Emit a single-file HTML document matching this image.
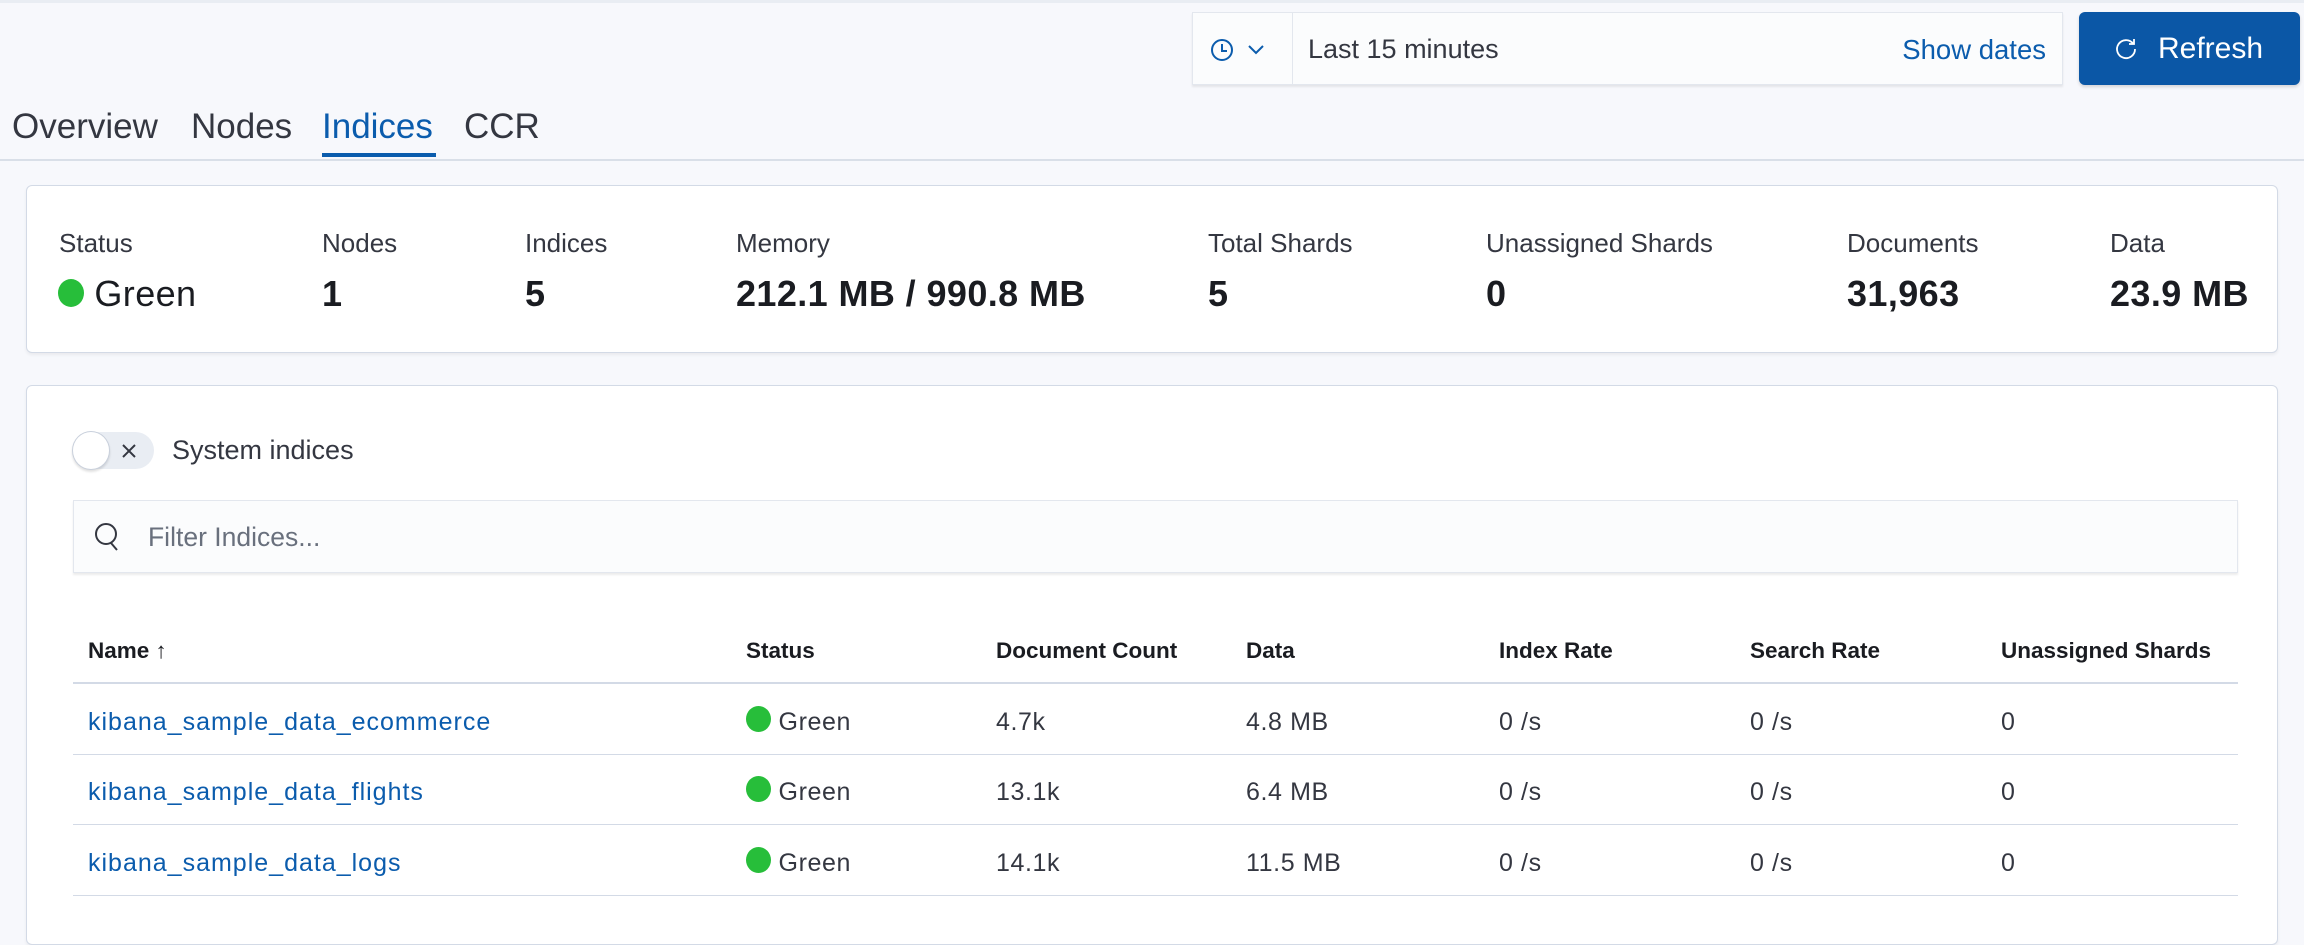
<!DOCTYPE html>
<html><head><meta charset="utf-8"><style>
*{box-sizing:border-box;margin:0;padding:0}
body{width:2304px;height:910px;overflow:hidden;background:#f7f8fc;font-family:"Liberation Sans",sans-serif;color:#1a1c21;position:relative}
.a{position:absolute;white-space:nowrap}
.topline{left:0;top:0;width:2304px;height:3px;background:#e9edf3}
.dp{left:1192px;top:12px;width:871px;height:73px;background:#fbfcfd;border:1px solid #e3e7ee;box-shadow:0 2px 2px rgba(0,0,0,.08)}
.dp .ic{position:absolute;left:0;top:0;width:100px;height:100%;border-right:1px solid #e3e7ee}
.btn{left:2079px;top:12px;width:221px;height:73px;background:#0b57a6;border-radius:6px;color:#fff;font-size:30px;box-shadow:0 2px 3px rgba(0,0,0,.15)}
.tab{top:107px;font-size:35px;color:#343741}
.panel{background:#fff;border:1px solid #d3dae6;border-radius:6px;box-shadow:0 2px 3px rgba(0,0,0,.06)}
.lbl{top:228px;font-size:26px;color:#343741}
.val{top:273px;font-size:36px;letter-spacing:0.4px;font-weight:bold;color:#1a1c21}
.dot{display:inline-block;border-radius:50%;background:#27be3a;vertical-align:middle}
.th{top:638px;font-size:22.5px;font-weight:bold}
.td{font-size:25px;letter-spacing:0.6px;color:#343741}
.lnk{color:#0b5cad;letter-spacing:1px}
.hl{left:73px;width:2165px;height:1px;background:#d3dae6}
</style></head><body>
<div class="a topline"></div>
<div class="a dp"><div class="ic">
<svg style="position:absolute;left:16px;top:24px" width="60" height="26" viewBox="0 0 60 26"><circle cx="13" cy="13" r="10" fill="none" stroke="#0b5cad" stroke-width="2"/><path d="M13 7v7h5" fill="none" stroke="#0b5cad" stroke-width="2"/><path d="M40 9l7 7 7-7" fill="none" stroke="#0b5cad" stroke-width="2"/></svg></div>
<div class="a" style="left:115px;top:21px;font-size:27px;color:#343741">Last 15 minutes</div>
<div class="a" style="right:16px;top:21px;font-size:27.5px;color:#0b5cad">Show dates</div></div>
<div class="a btn"><svg style="position:absolute;left:35px;top:25px" width="24" height="24" viewBox="0 0 24 24"><path d="M19 6.5A9 9 0 1 0 21 12" fill="none" stroke="#fff" stroke-width="1.8"/><path d="M20 2v5h-5" fill="none" stroke="#fff" stroke-width="1.8"/></svg><span style="position:absolute;left:79px;top:20px">Refresh</span></div>
<div class="a tab" style="left:12px">Overview</div>
<div class="a tab" style="left:191px">Nodes</div>
<div class="a tab" style="left:322px;color:#0b5cad">Indices</div>
<div class="a" style="left:322px;top:153px;width:114px;height:4px;background:#0b5cad"></div>
<div class="a tab" style="left:464px">CCR</div>
<div class="a" style="left:0;top:159px;width:2304px;height:2px;background:#d9dfe8"></div>
<div class="a panel" style="left:26px;top:185px;width:2252px;height:168px"></div>
<div class="a lbl" style="left:59px">Status</div>
<div class="a lbl" style="left:322px">Nodes</div>
<div class="a lbl" style="left:525px">Indices</div>
<div class="a lbl" style="left:736px">Memory</div>
<div class="a lbl" style="left:1208px">Total Shards</div>
<div class="a lbl" style="left:1486px">Unassigned Shards</div>
<div class="a lbl" style="left:1847px">Documents</div>
<div class="a lbl" style="left:2110px">Data</div>
<div class="a val" style="left:58px;font-weight:normal"><span class="dot" style="width:26px;height:28px;margin-top:-6px"></span> Green</div>
<div class="a val" style="left:322px">1</div>
<div class="a val" style="left:525px">5</div>
<div class="a val" style="left:736px">212.1 MB / 990.8 MB</div>
<div class="a val" style="left:1208px">5</div>
<div class="a val" style="left:1486px">0</div>
<div class="a val" style="left:1847px">31,963</div>
<div class="a val" style="left:2110px">23.9 MB</div>
<div class="a panel" style="left:26px;top:385px;width:2252px;height:560px"></div>
<div class="a" style="left:73px;top:432px;width:81px;height:37px;border-radius:19px;background:#e9edf3"></div>
<div class="a" style="left:72px;top:431px;width:38px;height:39px;border-radius:50%;background:#fff;border:1px solid #c9d0dc;box-shadow:0 2px 2px rgba(0,0,0,.12)"></div>
<svg class="a" style="left:120px;top:442px" width="18" height="18" viewBox="0 0 18 18"><path d="M3 3l12 12M15 3L3 15" stroke="#343741" stroke-width="2"/></svg>
<div class="a" style="left:172px;top:435px;font-size:27px;color:#343741">System indices</div>
<div class="a" style="left:73px;top:500px;width:2165px;height:73px;background:#fbfcfd;border:1px solid #e3e7ee;box-shadow:0 2px 2px rgba(0,0,0,.08)"></div>
<svg class="a" style="left:93px;top:521px" width="28" height="32" viewBox="0 0 28 32"><circle cx="13" cy="13" r="10" fill="none" stroke="#343741" stroke-width="2"/><path d="M18 22l6 7" stroke="#343741" stroke-width="2"/></svg>
<div class="a" style="left:148px;top:522px;font-size:26.5px;color:#69707d">Filter Indices...</div>
<div class="a th" style="left:88px">Name <span style="font-weight:normal">↑</span></div>
<div class="a th" style="left:746px">Status</div>
<div class="a th" style="left:996px">Document Count</div>
<div class="a th" style="left:1246px">Data</div>
<div class="a th" style="left:1499px">Index Rate</div>
<div class="a th" style="left:1750px">Search Rate</div>
<div class="a th" style="left:2001px">Unassigned Shards</div>
<div class="a hl" style="top:682px;height:2px"></div>
<div class="a hl" style="top:754px"></div>
<div class="a hl" style="top:824px"></div>
<div class="a hl" style="top:895px"></div>
<div class="a td lnk" style="left:88px;top:708px">kibana_sample_data_ecommerce</div>
<div class="a td" style="left:746px;top:708px"><span class="dot" style="width:25px;height:26px;margin-top:-8px"></span> Green</div>
<div class="a td" style="left:996px;top:708px">4.7k</div>
<div class="a td" style="left:1246px;top:708px">4.8 MB</div>
<div class="a td" style="left:1499px;top:708px">0 /s</div>
<div class="a td" style="left:1750px;top:708px">0 /s</div>
<div class="a td" style="left:2001px;top:708px">0</div>
<div class="a td lnk" style="left:88px;top:778px">kibana_sample_data_flights</div>
<div class="a td" style="left:746px;top:778px"><span class="dot" style="width:25px;height:26px;margin-top:-8px"></span> Green</div>
<div class="a td" style="left:996px;top:778px">13.1k</div>
<div class="a td" style="left:1246px;top:778px">6.4 MB</div>
<div class="a td" style="left:1499px;top:778px">0 /s</div>
<div class="a td" style="left:1750px;top:778px">0 /s</div>
<div class="a td" style="left:2001px;top:778px">0</div>
<div class="a td lnk" style="left:88px;top:849px">kibana_sample_data_logs</div>
<div class="a td" style="left:746px;top:849px"><span class="dot" style="width:25px;height:26px;margin-top:-8px"></span> Green</div>
<div class="a td" style="left:996px;top:849px">14.1k</div>
<div class="a td" style="left:1246px;top:849px">11.5 MB</div>
<div class="a td" style="left:1499px;top:849px">0 /s</div>
<div class="a td" style="left:1750px;top:849px">0 /s</div>
<div class="a td" style="left:2001px;top:849px">0</div>
</body></html>
